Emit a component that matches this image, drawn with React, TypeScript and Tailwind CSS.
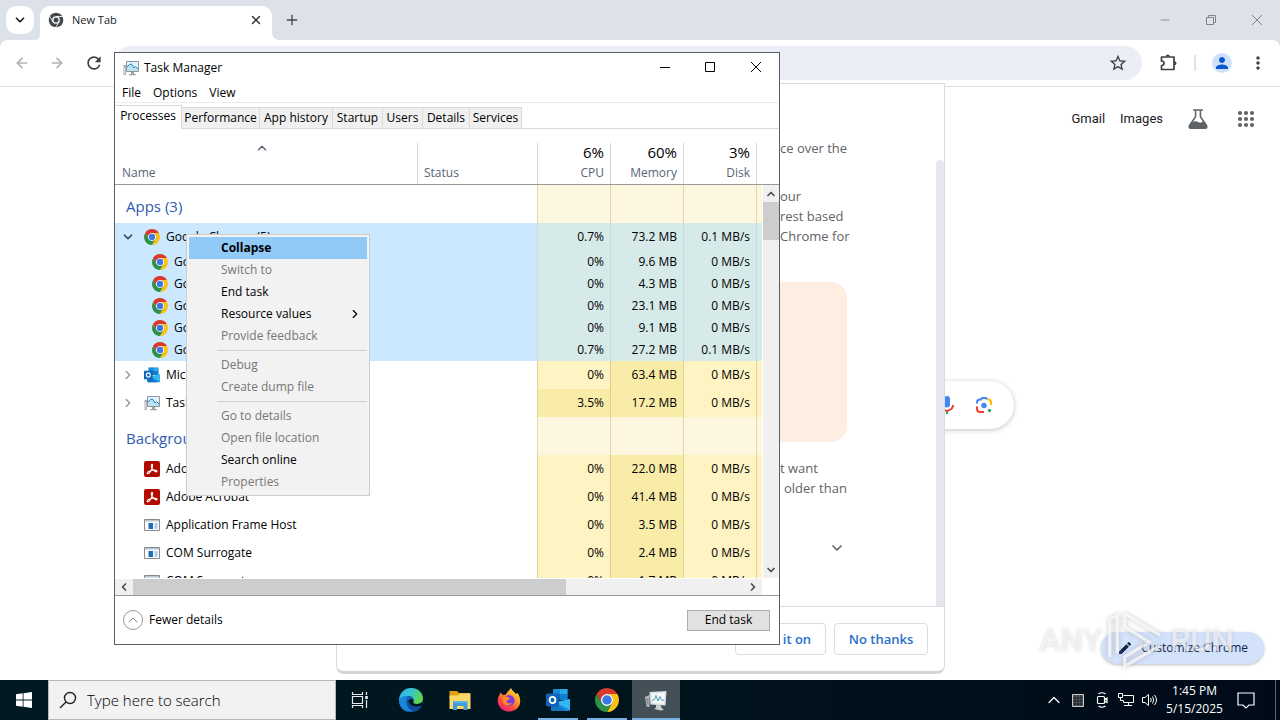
import React, { useState } from 'react';
import {
  ArrowLeft,
  ArrowRight,
  ChevronDown,
  ChevronLeft,
  ChevronRight,
  ChevronUp,
  Minus,
  Plus,
  X,
} from 'lucide-react';
import { MdEdit, MdMoreVert, MdPerson, MdRefresh, MdStarOutline } from 'react-icons/md';

interface IconProps {
  className?: string;
}

const ChromeLogo: React.FC<IconProps> = ({ className }) => (
  <svg viewBox="0 0 48 48" className={className} aria-hidden="true">
    <circle cx="24" cy="24" r="12.5" fill="#fff" />
    <path d="M44.78 12A24 24 0 0 0 3.22 12L13.61 30A12 12 0 0 1 24 12Z" fill="#d93a2b" />
    <path d="M24 48A24 24 0 0 0 44.78 12H24A12 12 0 0 1 34.39 30Z" fill="#fbc116" />
    <path d="M3.22 12A24 24 0 0 0 24 48L34.39 30A12 12 0 0 1 13.61 30Z" fill="#2a9147" />
    <circle cx="24" cy="24" r="9.5" fill="#3b78e7" />
  </svg>
);

const ChromeMono: React.FC<IconProps> = ({ className }) => (
  <svg viewBox="0 0 48 48" className={className} aria-hidden="true">
    <circle cx="24" cy="24" r="22" fill="#44484d" />
    <circle cx="24" cy="24" r="11.5" fill="#fff" />
    <path d="M24 13.500H46M33 29.500L22 48M15 29.500L4 11" stroke="#fff" strokeWidth="2.500" fill="none" />
    <circle cx="24" cy="24" r="7.500" fill="#44484d" />
  </svg>
);

const ExtensionIcon: React.FC<IconProps> = ({ className }) => (
  <svg viewBox="0 0 20 20" className={className} aria-hidden="true">
    <path d="M3.500 4H16V16.500H3.500V12.500Q6 12.500 6 10.200Q6 8 3.500 8Z" fill="none" stroke="#3c4043" strokeWidth="1.700" strokeLinejoin="round" />
    <path d="M7.800 3.500A2 2 0 0 1 11.800 3.500ZM16.500 8.300A2 2 0 0 1 16.500 12.300Z" fill="#3c4043" />
  </svg>
);

const FlaskIcon: React.FC<IconProps> = ({ className }) => (
  <svg viewBox="0 0 20 20" className={className} aria-hidden="true">
    <path d="M5.500 1.800H14.500M7.800 2V8L2.200 16Q1.500 18.500 3.500 18.500H16.500Q18.500 18.500 17.800 16L12.200 8V2" fill="none" stroke="#5f6368" strokeWidth="1.400" />
    <path d="M4.500 13Q8 11 10.500 13Q12.500 14 14.800 12L18 16.500V18.500H2V16.500Z" fill="#5f6368" />
  </svg>
);

const AppsGridIcon: React.FC<IconProps> = ({ className }) => (
  <svg viewBox="0 0 24 24" className={className} fill="#5f6368" aria-hidden="true">
    {[6, 12, 18].map(y => [6, 12, 18].map(x => <circle key={`${x}-${y}`} cx={x} cy={y} r="2.100" />))}
  </svg>
);

const MonitorIcon: React.FC<IconProps> = ({ className }) => (
  <svg viewBox="0 0 16 16" className={className} aria-hidden="true">
    <path d="M0.500 5H3V15H0.500Z" fill="#a9adb0" />
    <path d="M1.200 7H2.300V14H1.200Z" fill="#dcdee0" />
    <path d="M3.500 1.500H15.500V11.500H3.500Z" fill="#e3f3fb" stroke="#8d969c" />
    <path d="M4 6.500L6 5L8 4L10.500 7.500L12 6L15 8.500V11H4Z" fill="#bfe2f3" />
    <path d="M4 7L6.500 4.500L8.500 4L11 8L12.500 6.500L15 9" stroke="#2387b5" fill="none" />
    <path d="M8 12H11V14H13V15.200H6V14H8Z" fill="#9da4a8" />
  </svg>
);

const MonitorLargeIcon: React.FC<IconProps> = ({ className }) => (
  <svg viewBox="0 0 24 24" className={className} aria-hidden="true">
    <path d="M1 9L5.500 7V19L2.500 18.500Z" fill="#b9bdbf" />
    <path d="M2 10.500L4.500 10V17L3 16.800Z" fill="#8a9093" />
    <path d="M5.500 4L22.500 3L21.500 17.500L6.500 16.500Z" fill="#dfe3e4" />
    <path d="M7.500 5.500L21 4.800L20.200 15.800L8 15Z" fill="#f3f7f8" />
    <path d="M8 12.500L10.500 11.500L12 7.500L14 13L16 8.500L17.500 12L20.200 12.500" fill="none" stroke="#4d9ab8" />
    <path d="M12 17L17 17.300L17.500 20L20 21.500L17 22.500L10 21L12 19.500Z" fill="#c9cdcf" />
  </svg>
);

const OutlookIcon: React.FC<IconProps> = ({ className }) => (
  <svg viewBox="0 0 24 24" className={className} aria-hidden="true">
    <path d="M7 1H21.500V12H7Z" fill="#1066b5" />
    <path d="M7 1H14V6H7Z" fill="#1490df" />
    <path d="M14 1H21.500V6H14Z" fill="#28a8ea" />
    <path d="M14 6H21.500V12H14Z" fill="#0f7fcf" />
    <path d="M5 11L14.500 16L24 11V21.500Q24 23 22.500 23H6.500Q5 23 5 21.500Z" fill="#1b8ad8" />
    <path d="M24 11V22L9 14Z" fill="#35b8f1" />
    <path d="M5 13L20 23H6.500Q5 23 5 21.500Z" fill="#1474c4" />
    <rect x="0" y="5.500" width="13" height="13" rx="1" fill="#0f64b8" />
    <ellipse cx="6.500" cy="12" rx="2.900" ry="3.200" fill="none" stroke="#fff" strokeWidth="1.800" />
  </svg>
);

const AcrobatIcon: React.FC<IconProps> = ({ className }) => (
  <svg viewBox="0 0 16 16" className={className} aria-hidden="true">
    <rect width="16" height="16" rx="2" fill="#b30b00" />
    <path
      d="M3.200 12.500C2.500 11.300 6 9.500 9 9.200C12 8.900 13.500 9.700 12.900 10.600C12.200 11.500 9 9.500 7.900 7C7 5 7.200 3.200 8 3.200C9 3.200 8.600 5.600 7.600 8.200C6.500 11 4 13.700 3.200 12.500Z"
      fill="none"
      stroke="#fff"
      strokeWidth="1.100"
    />
  </svg>
);

const GenericAppIcon: React.FC<IconProps> = ({ className }) => (
  <svg viewBox="0 0 16 16" className={className} aria-hidden="true">
    <path d="M0.500 2.500H15.500V13.500H0.500Z" fill="#fff" stroke="#858a8e" />
    <path d="M1 3H15V4.500H1Z" fill="#b9c4cc" />
    <path d="M4.500 6H9V12H4.500Z" fill="#1c6fb8" />
    <path d="M10.500 7H13.500M10.500 9H13.500M10.500 11H13.500" stroke="#5e97c4" />
  </svg>
);

const EdgeIcon = () => (
  <svg viewBox="0 0 24 24" className="size-6" aria-hidden="true">
    <defs>
      <linearGradient id="edgeTop" x1="0" y1="0" x2="1" y2="0.400">
        <stop offset="0" stopColor="#2fb2e8" />
        <stop offset="0.500" stopColor="#33c4d6" />
        <stop offset="1" stopColor="#5ed749" />
      </linearGradient>
    </defs>
    <circle cx="12" cy="12" r="12" fill="#0f63b4" />
    <path d="M0.200 11C1 4.500 6 0 12 0C19 0 24 5 24 10.500C24 14 21 16 18 16C15 16 13.600 15 14.200 14C15.500 12 15 8.500 10 8C5 7.600 1.500 10 0.200 13Z" fill="url(#edgeTop)" />
    <path d="M0.100 12.500C1 9 5 7.500 9 8.200C6 11 6.500 19 13 22.500C7 25.500 0 20 0.100 12.500Z" fill="#1a86d9" />
    <path d="M9.300 12C8.500 17 14 20 21.800 17.500C22.500 17.300 22.700 18 22.200 18.500C19 16.500 24 23.800 13.500 22.800C7.500 20 6.800 14.500 9.300 12Z" fill="#134b9b" />
    <path d="M14.500 13.500C13.700 14.500 14.500 16 18 16C20.500 16 22.500 15 23.300 13.500V17L21.900 17.800C15 20 10 17 9.500 13C10.500 10 15 10.500 14.500 13.500Z" fill="#011620" />
  </svg>
);

const ExplorerIcon = () => (
  <svg viewBox="0 0 24 24" className="size-6" aria-hidden="true">
    <path d="M1.500 3H9L11 5H22V10H1.500Z" fill="#e3a019" />
    <path d="M1.500 7.500H10L12 5.500H22.500V21H1.500Z" fill="#fbd868" />
    <path d="M5 13H19.500V22H15.500V18H9V22H5Z" fill="#3f9bd6" />
    <path d="M5 13H19.500V15H5Z" fill="#59b3e8" />
  </svg>
);

const FirefoxIcon = () => (
  <svg viewBox="0 0 24 24" className="size-6" aria-hidden="true">
    <defs>
      <linearGradient id="foxFire" x1="0.900" y1="0" x2="0.200" y2="1">
        <stop offset="0" stopColor="#fff04a" />
        <stop offset="0.350" stopColor="#ffa427" />
        <stop offset="0.700" stopColor="#ff4b3e" />
        <stop offset="1" stopColor="#e31587" />
      </linearGradient>
    </defs>
    <path d="M3.500 4.500L6 7L9 6.500C10 4 12 3 14 0C15 3 18 4 19 6L20.500 5C23 8.500 24 13 22.500 17C20.800 21.300 16.500 23.500 12 23.500C5.500 23.500 0.500 18.500 0.700 12C0.800 9 2.500 7.500 3.500 4.500Z" fill="url(#foxFire)" />
    <circle cx="12.200" cy="12.500" r="5.400" fill="#7a3ce0" />
    <path d="M5.500 9C8 8 11 9 13 10C12.500 12 10 12 9.300 13C9.800 15 12 16 15 15C13 18.500 7 18 6 14Z" fill="#ff8a28" />
  </svg>
);

const TaskViewIcon = () => (
  <svg viewBox="0 0 18 18" className="size-[18px]" fill="none" stroke="#e8ecee" strokeWidth="1.200" aria-hidden="true">
    <path d="M1.500 5.500H11.500V12.500H1.500ZM1.500 1V3.500H11.500V1M1.500 17V14.500H11.500V17M15.500 1V4M15.500 9V17" />
    <path d="M14.200 5H16.800V8H14.200Z" fill="#e8ecee" stroke="none" />
  </svg>
);

const MicIcon = () => (
  <svg viewBox="0 0 24 24" className="size-6" aria-hidden="true">
    <path d="M12 14.500A3 3 0 0 0 15 11.500V6A3 3 0 0 0 9 6V11.500A3 3 0 0 0 12 14.500Z" fill="#4285f4" />
    <path d="M11 17.500H13V21H11Z" fill="#34a853" />
    <path d="M5.500 11.500A6.500 6.500 0 0 0 8 16.500" stroke="#fbbc04" strokeWidth="2" fill="none" />
    <path d="M8 16.600A6.500 6.500 0 0 0 18.200 12" stroke="#ea4335" strokeWidth="2" fill="none" />
  </svg>
);

const LensIcon = () => (
  <svg viewBox="0 0 24 24" className="size-6" fill="none" strokeWidth="2" aria-hidden="true">
    <path d="M5 10.500V9.500Q5 6.500 8 6.500H9L10 5H14L15 6.500" stroke="#4285f4" />
    <path d="M15.500 6.500H16Q19 6.500 19 9.500V12" stroke="#fbbc04" />
    <path d="M5 13.500V16Q5 19 8 19H12" stroke="#ea4335" />
    <circle cx="12" cy="12.500" r="2.700" fill="#4285f4" />
    <circle cx="17.500" cy="17.500" r="1.700" fill="#34a853" />
  </svg>
);

type ProcessIcon = React.FC<IconProps>;

interface ProcessRow {
  id: number;
  name: string;
  icon?: ProcessIcon;
  kind: 'group' | 'parent' | 'child' | 'process';
  expanded?: boolean;
  cpu?: string;
  memory?: string;
  disk?: string;
  busy?: boolean;
}

const processes: ProcessRow[] = [
  { id: 1, name: 'Apps (3)', kind: 'group' },
  { id: 2, name: 'Google Chrome (5)', icon: ChromeLogo, kind: 'parent', expanded: true, cpu: '0.7%', memory: '73.2 MB', disk: '0.1 MB/s' },
  { id: 3, name: 'Google Chrome', icon: ChromeLogo, kind: 'child', cpu: '0%', memory: '9.6 MB', disk: '0 MB/s' },
  { id: 4, name: 'Google Chrome', icon: ChromeLogo, kind: 'child', cpu: '0%', memory: '4.3 MB', disk: '0 MB/s' },
  { id: 5, name: 'Google Chrome', icon: ChromeLogo, kind: 'child', cpu: '0%', memory: '23.1 MB', disk: '0 MB/s' },
  { id: 6, name: 'Google Chrome', icon: ChromeLogo, kind: 'child', cpu: '0%', memory: '9.1 MB', disk: '0 MB/s' },
  { id: 7, name: 'Google Chrome', icon: ChromeLogo, kind: 'child', cpu: '0.7%', memory: '27.2 MB', disk: '0.1 MB/s' },
  { id: 8, name: 'Microsoft Outlook', icon: OutlookIcon, kind: 'parent', cpu: '0%', memory: '63.4 MB', disk: '0 MB/s' },
  { id: 9, name: 'Task Manager', icon: MonitorIcon, kind: 'parent', cpu: '3.5%', memory: '17.2 MB', disk: '0 MB/s', busy: true },
  { id: 10, name: 'Background processes', kind: 'group' },
  { id: 11, name: 'Adobe Acrobat', icon: AcrobatIcon, kind: 'process', cpu: '0%', memory: '22.0 MB', disk: '0 MB/s' },
  { id: 12, name: 'Adobe Acrobat', icon: AcrobatIcon, kind: 'process', cpu: '0%', memory: '41.4 MB', disk: '0 MB/s' },
  { id: 13, name: 'Application Frame Host', icon: GenericAppIcon, kind: 'process', cpu: '0%', memory: '3.5 MB', disk: '0 MB/s' },
  { id: 14, name: 'COM Surrogate', icon: GenericAppIcon, kind: 'process', cpu: '0%', memory: '2.4 MB', disk: '0 MB/s' },
  { id: 15, name: 'COM Surrogate', icon: GenericAppIcon, kind: 'process', cpu: '0%', memory: '1.7 MB', disk: '0 MB/s' },
];

const tabs = [
  { label: 'Performance', width: 'w-[78px]' },
  { label: 'App history', width: 'w-[73px]' },
  { label: 'Startup', width: 'w-[50px]' },
  { label: 'Users', width: 'w-[40px]' },
  { label: 'Details', width: 'w-[47px]' },
  { label: 'Services', width: 'w-[52px]' },
];

const menuGroups = [
  [
    { label: 'Collapse', enabled: true, primary: true },
    { label: 'Switch to', enabled: false },
    { label: 'End task', enabled: true },
    { label: 'Resource values', enabled: true, submenu: true },
    { label: 'Provide feedback', enabled: false },
  ],
  [
    { label: 'Debug', enabled: false },
    { label: 'Create dump file', enabled: false },
  ],
  [
    { label: 'Go to details', enabled: false },
    { label: 'Open file location', enabled: false },
    { label: 'Search online', enabled: true },
    { label: 'Properties', enabled: false },
  ],
];

const TabStrip = () => (
  <div className="flex h-10 items-end bg-[#dde1e9] pl-1.5">
    <button aria-label="Search tabs" className="mb-1.5 flex size-7 items-center justify-center rounded-[10px] bg-white">
      <ChevronDown className="size-3.5 text-[#202124]" strokeWidth={3} />
    </button>
    <svg viewBox="0 0 6 6" className="size-1.5" aria-hidden="true">
      <path d="M6 0V6H0Q6 6 6 0Z" fill="#fff" />
    </svg>
    <div className="flex h-[34px] w-[232px] items-center rounded-t-[10px] bg-white pl-2 pr-2 pb-1.5">
      <ChromeMono className="size-4" />
      <span className="ml-2 flex-1 text-[11px] text-[#202124]">New Tab</span>
      <button aria-label="Close tab" className="flex size-4 items-center justify-center">
        <X className="size-3.5 text-[#303236]" strokeWidth={2.5} />
      </button>
    </div>
    <svg viewBox="0 0 8 8" className="size-2" aria-hidden="true">
      <path d="M0 0V8H8Q0 8 0 0Z" fill="#fff" />
    </svg>
    <button aria-label="New tab" className="mb-3 ml-1 flex size-4 items-center justify-center">
      <Plus className="size-4 text-[#44484d]" strokeWidth={2} />
    </button>
    <div className="ml-auto flex h-10 items-center text-[#80858c]">
      <button aria-label="Minimize" className="flex w-[46px] justify-center">
        <Minus className="size-3.5" strokeWidth={1.5} />
      </button>
      <button aria-label="Restore" className="flex w-[46px] justify-center">
        <svg viewBox="0 0 12 12" className="size-3" fill="none" stroke="currentColor" aria-hidden="true">
          <path d="M1.500 3.500H8.500V10.500H1.500ZM3.500 3V1.500H10.500V8.500H9" />
        </svg>
      </button>
      <button aria-label="Close" className="flex w-[46px] justify-center">
        <svg viewBox="0 0 12 12" className="size-3" fill="none" stroke="currentColor" aria-hidden="true">
          <path d="M1 1L11 11M11 1L1 11" />
        </svg>
      </button>
    </div>
  </div>
);

const Toolbar = () => (
  <div className="bg-[#dde1e9]">
    <div className="flex h-[47px] items-center rounded-t-lg border-b border-[#dfe1e5] bg-white pr-3">
      <div className="flex w-[114px] items-center gap-[19px] pl-3.5">
        <button aria-label="Back"><ArrowLeft className="size-4 text-[#b0b3b8]" strokeWidth={2.5} /></button>
        <button aria-label="Forward"><ArrowRight className="size-4 text-[#b0b3b8]" strokeWidth={2.5} /></button>
        <button aria-label="Reload"><MdRefresh className="size-5 text-[#3c4043]" /></button>
      </div>
      <div className="flex h-[34px] flex-1 items-center rounded-full bg-[#ebedf7] pr-3.5">
        <input aria-label="Address bar" className="h-full flex-1 bg-transparent px-4 outline-none" />
        <button aria-label="Bookmark"><MdStarOutline className="size-5 text-[#3c4043]" /></button>
      </div>
      <div className="flex items-center pl-4">
        <button aria-label="Extensions"><ExtensionIcon className="size-5" /></button>
        <span className="mx-4 h-4 w-0.5 bg-[#dfe1ee]" />
        <button aria-label="Profile" className="flex size-5 items-center justify-center rounded-full bg-[#cfe0fc]">
          <MdPerson className="size-[18px] text-[#0b57d0]" />
        </button>
        <button aria-label="Menu" className="ml-4"><MdMoreVert className="size-5 text-[#3c4043]" /></button>
      </div>
    </div>
  </div>
);

const privacyLines = [
  { id: 'a', lines: ['ce over the'] },
  { id: 'b', lines: ['our', 'rest based', 'Chrome for'] },
];

const PrivacyDialog = () => (
  <div role="dialog" aria-label="Ad privacy" className="absolute left-[336px] top-[83px] flex h-[591px] w-[609px] flex-col rounded-b-lg border border-[#dadce0] border-b-[3px] border-b-[#d6d4d4] bg-white text-[13px] leading-5 text-[#5f6368]">
    <div className="flex h-[522px]">
      <div className="flex flex-1 flex-col pl-[443px] pt-[54px]">
        {privacyLines.map(p => (
          <div key={p.id} className="mb-7">
            {p.lines.map(line => <p key={line}>{line}</p>)}
          </div>
        ))}
        <div className="mt-2 h-40 w-[67px] rounded-r-2xl bg-[#feeee2]" />
        <div className="mt-4">
          <p>t want</p>
          <p className="pl-1">older than</p>
        </div>
        <button aria-label="Show more" className="ml-[49px] mt-[42px]">
          <ChevronDown className="size-4" strokeWidth={2.5} />
        </button>
      </div>
      <div className="mt-[76px] w-2 rounded-t bg-[#e6e6ec]" />
    </div>
    <div className="flex justify-end gap-2 border-t border-[#dadce0] pr-4 pt-4 font-semibold text-[#2a6fc9]">
      <button className="h-8 w-[91px] rounded border border-[#dadce0]">Turn it on</button>
      <button className="h-8 w-[94px] rounded border border-[#dadce0]">No thanks</button>
    </div>
  </div>
);

const Watermark = () => (
  <div className="pointer-events-none absolute bottom-2 right-[46px] flex items-center font-['Roboto',sans-serif] text-[32px] font-medium leading-none text-white/60 [text-shadow:0_0_3px_#9999a066]" aria-hidden="true">
    <span>ANY</span>
    <svg viewBox="0 0 64 64" className="mx-1 h-16 w-[60px] drop-shadow-[0_0_2px_#aaaab0]" fill="none" stroke="#fff" strokeOpacity="0.7" strokeWidth="3.500">
      <path d="M4 50V10L12 6V46M20 4L58 27M20 4V18L46 34L20 50V60L58 38" />
    </svg>
    <span>RUN</span>
  </div>
);

const NewTabPage = () => (
  <main className="relative flex-1 bg-white">
    <nav className="flex items-center justify-end pr-[22px] pt-5 font-['Roboto',Arial,sans-serif] text-[13px] text-[#202124]">
      <a href="#gmail" className="mr-[15px]">Gmail</a>
      <a href="#images" className="mr-6">Images</a>
      <button aria-label="Labs" className="mr-[25px]"><FlaskIcon className="size-[22px]" /></button>
      <button aria-label="Apps"><AppsGridIcon className="size-6" /></button>
    </nav>
    <div className="mx-auto mt-[250px] flex h-12 w-[748px] items-center rounded-full bg-white pr-[18px] shadow-[0_1px_5px_rgba(32,33,36,0.28)]">
      <input aria-label="Search Google" className="h-full flex-1 bg-transparent px-5 outline-none" />
      <button aria-label="Voice search" className="mr-[13px]"><MicIcon /></button>
      <button aria-label="Search by image"><LensIcon /></button>
    </div>
    <button className="absolute bottom-4 right-4 flex h-8 items-center gap-2 rounded-full bg-[#d3e1fb] px-4 text-[12px] text-[#0f2547] shadow-[0_1px_3px_rgba(0,0,0,0.25)]">
      <MdEdit className="size-4" />
      Customize Chrome
    </button>
    <Watermark />
  </main>
);

const ProcessTable: React.FC = () => {
  const numeric = 'border-l pr-1.5 text-right';

  const cellColor = (row: ProcessRow, selected: boolean, column: 'cpu' | 'memory' | 'disk') => {
    if (selected) return 'bg-[#d6eae9] border-[#c9dfdd]';
    if (row.kind === 'group') return 'bg-[#fef7df] border-[#e3d6ab]';
    if (column === 'memory' || (column === 'cpu' && row.busy)) return 'bg-[#f9eca8] border-[#dfd08c]';
    return 'bg-[#fef3c3] border-[#e0d198]';
  };

  return (
    <table className="w-full table-fixed border-separate border-spacing-0">
      <colgroup>
        <col className="w-[302px]" />
        <col />
        <col className="w-[73px]" />
        <col className="w-[73px]" />
        <col className="w-[73px]" />
        <col className="w-[6px]" />
      </colgroup>
      <thead className="text-left text-[#5a6478]">
        <tr className="h-[56px]">
          <th className="border-b border-[#999] p-0 font-normal">
            <div className="flex h-[55px] flex-col justify-between pb-[3px] pl-[7px] pt-3">
              <ChevronUp className="mr-[15px] size-3.5 self-center" strokeWidth={2.5} />
              <span className="leading-4">Name</span>
            </div>
          </th>
          <th className="border-b border-[#999] p-0 align-bottom font-normal">
            <div className="flex h-[41px] items-end border-l border-[#d5d5d5] pb-[3px] pl-1.5 leading-4">Status</div>
          </th>
          {[['6%', 'CPU'], ['60%', 'Memory'], ['3%', 'Disk']].map(([value, label]) => (
            <th key={label} className="border-b border-[#999] p-0 align-bottom font-normal">
              <div className="flex h-[41px] flex-col justify-between border-l border-[#d5d5d5] pb-[3px] pr-1.5 text-right">
                <span className="text-[15px] leading-[18px] text-black">{value}</span>
                <span className="leading-4">{label}</span>
              </div>
            </th>
          ))}
          <th className="border-b border-[#999] p-0 align-bottom" aria-label="More">
            <div className="h-[41px] border-l border-[#d5d5d5]" />
          </th>
        </tr>
      </thead>
      <tbody>
        {processes.map(row => {
          const selected = row.id >= 2 && row.id <= 7;
          const height = row.kind === 'group' ? 'h-[38px]' : row.kind === 'child' ? 'h-[22px]' : 'h-7';
          const Icon = row.icon;
          return (
            <tr key={row.id} className={`${height} ${selected ? 'bg-[#cce8ff]' : ''}`}>
              {row.kind === 'group' ? (
                <td className="whitespace-nowrap p-0 pl-[11px] pt-1 text-[15px] leading-5 text-[#2f5bb0]">{row.name}</td>
              ) : (
                <td className="p-0">
                  <div className={`flex items-center leading-4 ${row.kind === 'child' ? 'pl-[37px]' : 'pl-1.5'}`}>
                    {row.kind !== 'child' && (
                      <span className="mr-2 flex w-[15px]">
                        {row.kind === 'parent' && (row.expanded
                          ? <ChevronDown className="size-3.5 text-[#33475c]" strokeWidth={3} />
                          : <ChevronRight className="size-3.5 text-[#999]" strokeWidth={2.5} />)}
                      </span>
                    )}
                    {Icon && <Icon className="mr-1.5 size-4 shrink-0" />}
                    <span className="whitespace-nowrap">{row.name}</span>
                  </div>
                </td>
              )}
              <td className="p-0" />
              <td className={`p-0 ${numeric} ${cellColor(row, selected, 'cpu')}`}>{row.cpu}</td>
              <td className={`p-0 ${numeric} ${cellColor(row, selected, 'memory')}`}>{row.memory}</td>
              <td className={`p-0 ${numeric} ${cellColor(row, selected, 'disk')}`}>{row.disk}</td>
              <td className={`border-l p-0 ${cellColor(row, selected, 'disk')}`} />
            </tr>
          );
        })}
      </tbody>
    </table>
  );
};

const TaskManager = () => {
  const [active, setActive] = useState('Processes');

  return (
    <section aria-label="Task Manager" className="absolute left-[114px] top-[52px] flex h-[593px] w-[666px] flex-col border border-[#5d5d66] bg-white text-[12px] text-black">
      {/* Title bar */}
      <div className="flex h-[30px] items-center pl-2">
        <MonitorIcon className="size-4" />
        <h1 className="ml-[5px] flex-1">Task Manager</h1>
        <button aria-label="Minimize" className="flex w-[45px] justify-center">
          <svg viewBox="0 0 12 12" className="size-3" stroke="#000" aria-hidden="true"><path d="M0 5.500H10" /></svg>
        </button>
        <button aria-label="Maximize" className="flex w-[45px] justify-center">
          <svg viewBox="0 0 12 12" className="size-3" fill="none" stroke="#000" aria-hidden="true"><path d="M0.500 0.500H9.500V9.500H0.500Z" /></svg>
        </button>
        <button aria-label="Close" className="flex w-[46px] justify-center">
          <svg viewBox="0 0 12 12" className="size-3" stroke="#000" aria-hidden="true"><path d="M1 0L11 10M11 0L1 10" /></svg>
        </button>
      </div>

      {/* Menu bar */}
      <div className="flex h-5 items-center gap-3 border-b border-[#ececec] pl-[7px]">
        <button>File</button>
        <button>Options</button>
        <button>View</button>
      </div>

      {/* Tabs */}
      <div role="tablist" className="flex h-[26px] items-end border-b border-[#d9d9d9] leading-4">
        <button
          role="tab"
          aria-selected={active === 'Processes'}
          onClick={() => setActive('Processes')}
          className="-mb-px h-6 w-[67px] border-r border-t border-[#d9d9d9] bg-white pb-1 text-center"
        >
          Processes
        </button>
        {tabs.map(tab => (
          <button
            key={tab.label}
            role="tab"
            aria-selected={active === tab.label}
            onClick={() => setActive(tab.label)}
            className={`h-[21px] border-r border-t border-[#d9d9d9] bg-[#f0f0f0] text-center whitespace-nowrap ${tab.width}`}
          >
            {tab.label}
          </button>
        ))}
      </div>

      {/* Process list */}
      <div className="flex min-h-0 flex-1">
        <div className="min-w-0 flex-1 overflow-hidden">
          <ProcessTable />
        </div>
        <div className="flex w-[17px] flex-col">
          <div className="h-[56px] border-b border-[#999]" />
          <div className="ml-px flex flex-1 flex-col bg-[#f0f0f0]">
            <button aria-label="Scroll up" className="flex h-[17px] items-center justify-center">
              <ChevronUp className="size-3 text-[#505050]" strokeWidth={3.5} />
            </button>
            <div className="h-[38px] bg-[#cdcdcd]" />
            <button aria-label="Scroll down" className="mt-auto flex h-[17px] items-center justify-center">
              <ChevronDown className="size-3 text-[#505050]" strokeWidth={3.5} />
            </button>
          </div>
        </div>
      </div>
      <div className="flex h-[17px] border-t border-white pr-[17px]">
        <div className="flex flex-1 items-center bg-[#f0f0f0]">
          <button aria-label="Scroll left" className="flex w-[18px] justify-center">
            <ChevronLeft className="size-3 text-[#505050]" strokeWidth={3.5} />
          </button>
          <div className="h-4 w-[433px] bg-[#cdcdcd]" />
          <button aria-label="Scroll right" className="ml-auto flex w-[18px] justify-center">
            <ChevronRight className="size-3 text-[#505050]" strokeWidth={3.5} />
          </button>
        </div>
      </div>

      {/* Footer */}
      <div className="flex h-[49px] items-center justify-between border-t border-[#999] pl-2 pr-[9px]">
        <button className="flex items-center gap-1.5">
          <span className="flex size-5 items-center justify-center rounded-full border border-[#999]">
            <ChevronUp className="size-4 text-[#888]" strokeWidth={1.5} />
          </span>
          Fewer details
        </button>
        <button className="h-[21px] w-[83px] border border-[#adadad] bg-[#e1e1e1] leading-4">End task</button>
      </div>
    </section>
  );
};

const ContextMenu = () => (
  <div role="menu" className="absolute left-[186px] top-[234px] w-[184px] border border-[#ccc] bg-[#f2f2f2] p-0.5 text-[12px]">
    {menuGroups.map((group, index) => (
      <div key={group[0].label}>
        {index > 0 && <div className="my-[3px] ml-7 h-px bg-[#d0d0d0]" />}
        {group.map(item => (
          <button
            key={item.label}
            role="menuitem"
            disabled={!item.enabled}
            className={`flex h-[22px] w-full items-center pl-8 pr-[5px] text-left ${
              item.primary ? 'bg-[#91c9f7] font-bold' : ''
            } ${item.enabled ? 'text-black' : 'text-[#777]'}`}
          >
            <span className="flex-1">{item.label}</span>
            {item.submenu && <ChevronRight className="size-3.5" strokeWidth={2} />}
          </button>
        ))}
      </div>
    ))}
  </div>
);

const taskbarApps = [
  { label: 'Microsoft Edge', icon: <EdgeIcon />, state: '' },
  { label: 'File Explorer', icon: <ExplorerIcon />, state: '' },
  { label: 'Firefox', icon: <FirefoxIcon />, state: '' },
  { label: 'Outlook', icon: <OutlookIcon className="size-6" />, state: 'open' },
  { label: 'Google Chrome', icon: <ChromeLogo className="size-6" />, state: 'open' },
  { label: 'Task Manager', icon: <MonitorLargeIcon className="size-6" />, state: 'active' },
];

const Taskbar = () => (
  <footer className="flex h-10 items-stretch bg-linear-to-r from-[#011a22] via-[#01141d] to-[#000a18] text-[12px] text-white">
    <button aria-label="Start" className="flex w-12 items-center justify-center">
      <svg viewBox="0 0 16 16" className="size-4" fill="#fff" aria-hidden="true">
        <path d="M0 2.300L6.700 1.300V7.600H0ZM7.500 1.200L16 0V7.600H7.500ZM0 8.400H6.700V14.700L0 13.700ZM7.500 8.400H16V16L7.500 14.800Z" />
      </svg>
    </button>
    <label className="flex w-72 items-center border border-[#b8b8b8] bg-[#f2f2f2] pl-2.5 text-[#333]">
      <svg viewBox="0 0 18 18" className="size-[18px] shrink-0" fill="none" stroke="#222" strokeWidth="1.400" aria-hidden="true">
        <circle cx="11" cy="7" r="5.500" />
        <path d="M7 11L1 17" />
      </svg>
      <input
        aria-label="Search"
        placeholder="Type here to search"
        className="ml-2.5 w-full bg-transparent text-[15px] font-light outline-none placeholder:text-black"
      />
    </label>
    <button aria-label="Task view" className="mr-[3px] flex w-12 items-center justify-center"><TaskViewIcon /></button>
    <div className="flex gap-px">
      {taskbarApps.map(app => (
        <button
          key={app.label}
          aria-label={app.label}
          className={`flex w-12 flex-col items-center ${app.state === 'active' ? 'bg-[#435057]' : ''}`}
        >
          <span className="flex flex-1 items-center">{app.icon}</span>
          {app.state !== '' && <span className={`-mt-0.5 h-0.5 bg-[#76b0e4] ${app.state === 'active' ? 'w-12' : 'w-10'}`} />}
        </button>
      ))}
    </div>
    <div className="ml-auto flex items-center">
      <div className="flex items-center gap-2">
        <button aria-label="Show hidden icons" className="flex size-4 items-center justify-center"><ChevronUp className="size-5 shrink-0" strokeWidth={1.5} /></button>
        <svg viewBox="0 0 16 16" className="size-4" aria-hidden="true">
          <path d="M2.500 2.500H13.500V14.500H2.500Z" fill="#5c6165" stroke="#c9ccd0" />
          <path d="M5 3V14M8 3V14M11 3V14M3 6H13M3 9H13M3 12H13" stroke="#1c2228" />
        </svg>
        <svg viewBox="0 0 16 16" className="size-4" fill="none" stroke="#fff" strokeWidth="1.200" aria-hidden="true">
          <path d="M3.500 5.500Q3.500 4.500 4.500 4.500H9.500Q10.500 4.500 10.500 5.500V10.500Q10.500 11.500 9.500 11.500H4.500Q3.500 11.500 3.500 10.500ZM10.500 7.500L13 6V10.500L10.500 9M4.500 2Q8 -0.500 11.500 2M4.500 14Q8 16.500 11.500 14" />
        </svg>
        <svg viewBox="0 0 16 16" className="size-4" fill="none" stroke="#fff" aria-hidden="true">
          <path d="M5.500 3.500H15.500V10.500H5.500M0.500 1.500H4.500V5.500H0.500ZM2.500 5.500V8.500H5.500V10.500M10.500 10.500V13.500M6 13.500H14" />
        </svg>
        <svg viewBox="0 0 17 16" className="h-4 w-[17px]" fill="none" stroke="#fff" aria-hidden="true">
          <path d="M0.500 5.500H3L6.500 2.500V13.500L3 10.500H0.500ZM8.500 6Q10 8 8.500 10M10.500 4.500Q13 8 10.500 11.500M12.500 3Q16.500 8 12.500 13" />
        </svg>
      </div>
      <div className="w-[71px] text-center leading-[18px]">
        <p>1:45 PM</p>
        <p>5/15/2025</p>
      </div>
      <button aria-label="Notifications" className="ml-[7px] mr-5">
        <svg viewBox="0 0 18 18" className="size-[18px]" fill="none" stroke="#fff" strokeWidth="1.200" aria-hidden="true">
          <path d="M1 2H17V14H12L9 17L6 14H1Z" />
        </svg>
      </button>
      <span className="mr-1 h-10 w-px bg-[#5a626c]" />
    </div>
  </footer>
);

export default function App() {
  return (
    <div className="relative flex min-h-screen flex-col overflow-hidden font-['Open_Sans','Noto_Sans',sans-serif]">
      <TabStrip />
      <Toolbar />
      <NewTabPage />
      <PrivacyDialog />
      <TaskManager />
      <ContextMenu />
      <Taskbar />
    </div>
  );
}
